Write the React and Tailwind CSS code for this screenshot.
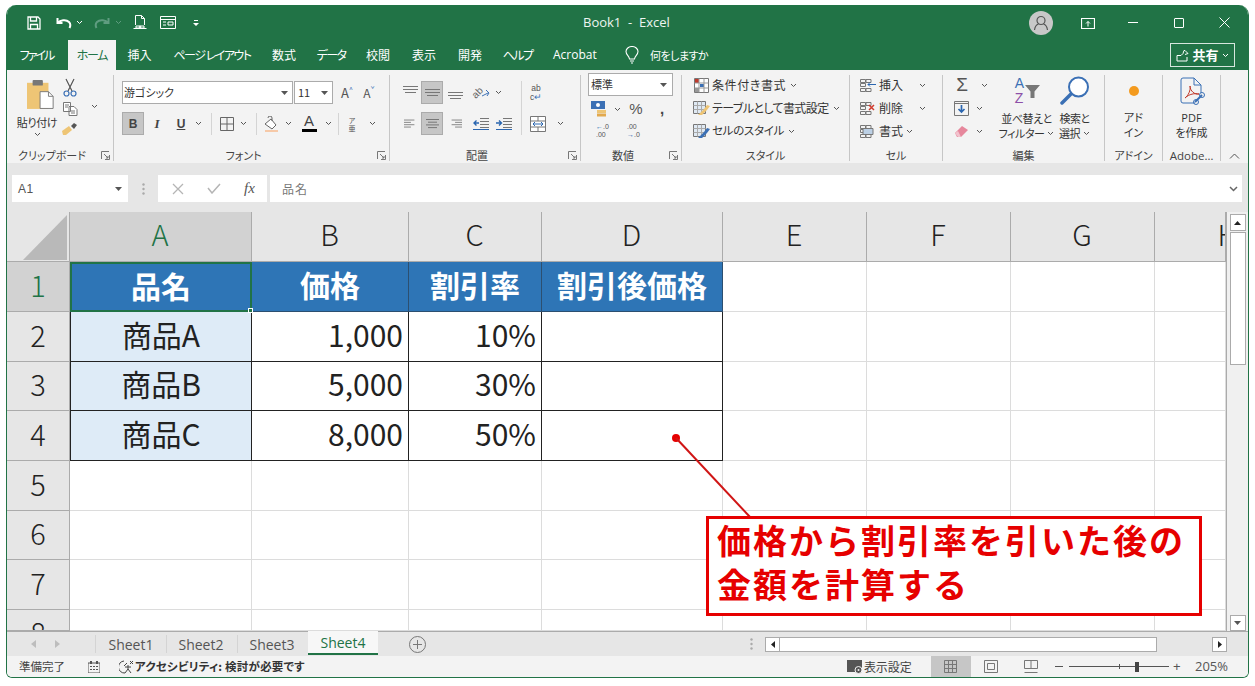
import React from "react";

const Chev = ({ c = "#555", w = 7 }) => (
  <svg width={w} height="5" viewBox="0 0 7 5" fill="none"><path d="M1 1l2.5 2.5L6 1" stroke={c} strokeWidth="1" /></svg>
);
const Drop = () => (
  <svg width="7" height="4" viewBox="0 0 7 4"><path d="M0 0h7L3.5 4z" fill="#555" /></svg>
);
const Launcher = () => (
  <svg width="9" height="9" viewBox="0 0 9 9" fill="none" stroke="#777"><path d="M.5 8V.5H8M8.5 4v4.5H4M3 3l4 4M7 5v2H5" /></svg>
);
const Lines = ({ kind = "c", top = 0, w = 15 }) => {
  const rows = kind === "l" ? [[0, 12], [0, 8], [0, 12], [0, 8]] : kind === "r" ? [[3, 15], [7, 15], [3, 15], [7, 15]] : [[1, 14], [3, 12], [1, 14], [3, 12]];
  return (
    <svg width={w} height="11" viewBox="0 0 15 11" stroke="#777" fill="none">
      {rows.map((r, i) => <path key={i} d={`M${r[0]} ${1.5 + i * 2.7 + top}H${r[1]}`} />)}
    </svg>
  );
};
const VLines = ({ y }) => (
  <svg width="15" height="14" viewBox="0 0 15 14" stroke="#777" fill="none">
    <path d={`M0 ${y + .5}H15M0 ${y + 3.5}H15M2 ${y + 6.5}H13`} />
  </svg>
);
const Sep = ({ h = "h-[22px]" }) => <div className={`w-px shrink-0 bg-[#d4d4d4] ${h}`} />;
const S = ({ c, children }) => <div className={`flex items-center justify-center shrink-0 ${c}`}>{children}</div>;

function Group({ w, label, launcher = true, children }) {
  return (
    <div className={`${w} shrink-0 flex flex-col border-r border-[#c6c6c6] h-[86px]`}>
      <div className="flex-1 min-h-0">{children}</div>
      <div className="h-[12px] flex items-center">
        <div className="flex-1 text-center text-[11px] leading-[12px] text-[#444] whitespace-nowrap">{label}</div>
        {launcher && <div className="w-[16px] flex justify-center"><Launcher /></div>}
      </div>
    </div>
  );
}

function TitleBar() {
  return (
    <div className="h-[35px] bg-[#217346] flex items-center text-white relative shrink-0">
      <S c="w-[14px] ml-[20px]">
        <svg width="14" height="14" viewBox="0 0 14 14" fill="none" stroke="#fff" strokeWidth="1.3"><path d="M1 1h10l2 2v10H1zM3.5 1v4h6V1M3.5 13V8.5h7V13" /></svg>
      </S>
      <S c="w-[20px] ml-[13px]">
        <svg width="16" height="12" viewBox="0 0 16 12" fill="none" stroke="#fff" strokeWidth="2"><path d="M1.5 1v5h5M2 6c2-3 8-4 11-1 1.500 1.500 1.500 4 .5 6" /></svg>
      </S>
      <S c="w-[10px]"><Chev c="#fff" /></S>
      <S c="w-[20px] ml-[8px]">
        <svg width="16" height="12" viewBox="0 0 16 12" fill="none" stroke="#5f9c80" strokeWidth="2"><path d="M14.500 1v5h-5M14 6c-2-3-8-4-11-1-1.500 1.500-1.500 4-.5 6" /></svg>
      </S>
      <S c="w-[10px] ml-[1px]"><Chev c="#5f9c80" /></S>
      <S c="w-[14px] ml-[10px]">
        <svg width="14" height="15" viewBox="0 0 14 15" fill="none" stroke="#fff"><path d="M2.500 10V.5h6l3 3V10M8.500.5v3h3M.5 13.500h13M3 11h8v2H3z" /><circle cx="7" cy="12" r=".9" fill="#fff" /></svg>
      </S>
      <S c="w-[16px] ml-[13px]">
        <svg width="16" height="13" viewBox="0 0 16 13" fill="none" stroke="#fff"><path d="M.5.500h15v12H.5zM1 3.500h14M3 6h3M3 9h3M8 6h5v3H8z" /></svg>
      </S>
      <S c="w-[8px] ml-[16px]">
        <svg width="6" height="6" viewBox="0 0 6 6" fill="#fff"><path d="M1 0h4v1H1zM0 3h6L3 6z" /></svg>
      </S>
      <div className="absolute left-[576px] text-[13px] whitespace-nowrap [font-family:'Open_Sans',sans-serif] text-[#eef5f1]">Book1&nbsp; -&nbsp; Excel</div>
      <div className="ml-auto flex items-center">
        <div className="w-[24px] h-[24px] rounded-full bg-[#c8c8c8] flex items-center justify-center">
          <svg width="16" height="16" viewBox="0 0 16 16" fill="none" stroke="#555" strokeWidth="1.200"><circle cx="8" cy="5.500" r="4" /><path d="M1.500 15c.5-3.500 2.500-5.500 4-6M14.500 15c-.5-3.500-2.500-5.500-4-6" /></svg>
        </div>
        <S c="w-[15px] ml-[27px]">
          <svg width="14" height="12" viewBox="0 0 14 12" fill="none" stroke="#fff"><path d="M.5 1.500h13v10H.5zM0 1.500h14" strokeWidth="1.200" /><path d="M7 9.500V4.500M5 6.500l2-2 2 2" /></svg>
        </S>
        <S c="w-[12px] ml-[32px]"><div className="w-[10px] h-px bg-white" /></S>
        <S c="w-[12px] ml-[34px]"><div className="w-[10px] h-[10px] border border-white rounded-[1px]" /></S>
        <S c="w-[12px] ml-[33px] mr-[18px]">
          <svg width="11" height="11" viewBox="0 0 11 11" stroke="#fff"><path d="M.5.500l10 10M10.500.500l-10 10" /></svg>
        </S>
      </div>
    </div>
  );
}

const tabs = [
  { c: "w-[33px] ml-[13px] tracking-[-2px]", t: "ファイル" },
  { c: "w-[48px] ml-[15px] tracking-[-1.300px] bg-[#f3f3f3] text-[#217346]", t: "ホーム" },
  { c: "w-[23px] ml-[12px]", t: "挿入" },
  { c: "w-[78px] ml-[22px] tracking-[-1.500px]", t: "ページ レイアウト" },
  { c: "w-[24px] ml-[21px]", t: "数式" },
  { c: "w-[28px] ml-[21px] tracking-[-1.600px]", t: "データ" },
  { c: "w-[24px] ml-[21px]", t: "校閲" },
  { c: "w-[24px] ml-[22px]", t: "表示" },
  { c: "w-[24px] ml-[22px]", t: "開発" },
  { c: "w-[29px] ml-[21px] tracking-[-1.600px]", t: "ヘルプ" },
];

function TabBar() {
  return (
    <div className="h-[30px] bg-[#217346] flex items-end text-white text-[12px] shrink-0">
      {tabs.map(({ c, t }) => (
        <div key={t} className={`${c} h-[30px] flex items-center justify-center whitespace-nowrap`}>{t}</div>
      ))}
      <div className="ml-[21px] w-[46px] h-[30px] flex items-center text-[12px] whitespace-nowrap [font-family:'Open_Sans',sans-serif]">Acrobat</div>
      <S c="w-[16px] ml-[25px] h-[30px]">
        <svg width="14" height="18" viewBox="0 0 14 18" fill="none" stroke="#fff" strokeWidth="1.100"><path d="M4.500 13c0-3-3.500-4-3.500-7.500a6 5 0 0 1 12 0C13 9 9.500 10 9.500 13zM5 15h4M6 17h2" /></svg>
      </S>
      <div className="ml-[10px] h-[30px] flex items-center text-[11px] tracking-[-0.500px] whitespace-nowrap">何をしますか</div>
      <div className="ml-auto mr-[13px] mb-[3px] w-[65px] h-[24px] border border-[#d7e6de] flex items-center justify-center gap-[3px]">
        <svg width="13" height="13" viewBox="0 0 13 13" fill="none" stroke="#fff"><path d="M1 6.500h4l2-2 1-3h1l3 3-3 1M1 6.500v5.500h10V8" /></svg>
        <span className="font-bold text-[13px]">共有</span>
        <Chev c="#fff" />
      </div>
    </div>
  );
}

function Clipboard() {
  return (
    <Group w="w-[107px]" label="クリップボード">
      <div className="flex">
        <div className="w-[50px] ml-[5px] mt-[3px] flex flex-col items-center">
          <svg className="ml-[8px]" width="28" height="32" viewBox="0 0 30 32">
            <rect x="0" y="4" width="23" height="28" fill="#eec575" />
            <rect x="6" y="1" width="11" height="6" rx="1" fill="#777" />
            <path d="M14 13.500h9l5 5v13H14z" fill="#fff" stroke="#777" />
            <path d="M23 13.500v5h5" fill="none" stroke="#777" />
          </svg>
          <div className="text-[11px] leading-[14px] mt-[5px] whitespace-nowrap text-[#333] tracking-[-0.4px]">貼り付け</div>
          <div className="mt-[3px]"><Chev /></div>
        </div>
        <div className="w-[20px] ml-[-2px] flex flex-col items-center pt-[3px]">
          <svg width="14" height="20" viewBox="0 0 14 20" fill="none" stroke="#555" strokeWidth="1.200"><path d="M3 1l6 12M11 1L5 13" /><circle cx="3.500" cy="15.500" r="2.500" stroke="#3b70b5" /><circle cx="10.500" cy="15.500" r="2.500" stroke="#3b70b5" /></svg>
          <svg className="mt-[4px]" width="15" height="14" viewBox="0 0 15 14" fill="#fff" stroke="#777"><path d="M.5.500h7v9h-7zM6 4.500h5l3 3v6H6z" /><path d="M2 3h4M2 5h3M8 9h4M8 11h4" fill="none" /></svg>
          <svg className="mt-[6px]" width="16" height="13" viewBox="0 0 16 13"><path d="M0 9l7-5 3 4-6 5H1z" fill="#eec575" /><path d="M9 4l3-3 3 2-3 4z" fill="#555" /></svg>
        </div>
        <div className="ml-[11px] mt-[29px]"><Chev /></div>
      </div>
    </Group>
  );
}

function FontGroup() {
  return (
    <Group w="w-[276px]" label="フォント">
      <div className="pl-[8px] pt-[6px] flex flex-col">
        <div className="flex items-center h-[23px]">
          <div className="w-[171px] h-[23px] bg-white border border-[#ababab] flex items-center pl-[1px] text-[11px] text-[#333]">
            <span className="flex-1">游ゴシック</span><span className="mr-[4px]"><Drop /></span>
          </div>
          <div className="ml-[1px] w-[39px] h-[23px] bg-white border border-[#ababab] flex items-center pl-[3px] text-[11px] text-[#333]">
            <span className="flex-1">11</span><span className="mr-[4px]"><Drop /></span>
          </div>
          <S c="w-[22px] ml-[3px] text-[13px] text-[#555]">A<sup className="text-[7px] text-[#3b70b5]">^</sup></S>
          <S c="w-[22px] text-[12px] text-[#555]">A<sup className="text-[7px] text-[#3b70b5]">ˇ</sup></S>
        </div>
        <div className="flex items-center h-[23px] mt-[8px]">
          <S c="w-[22px] h-[23px] bg-[#c6c6c6] border border-[#ababab] font-bold text-[12px] text-[#444] [font-family:'Liberation_Sans',sans-serif]">B</S>
          <S c="w-[26px] italic font-bold text-[13px] text-[#444] [font-family:'Liberation_Serif',serif]">I</S>
          <S c="w-[22px] underline font-bold text-[12px] text-[#444] [font-family:'Liberation_Sans',sans-serif]">U</S>
          <S c="w-[12px]"><Chev /></S>
          <S c="w-[14px]"><Sep /></S>
          <S c="w-[18px]">
            <svg width="14" height="14" viewBox="0 0 14 14" fill="none" stroke="#666"><path d="M.5.500h13v13H.5zM7 .5v13M.5 7h13" /></svg>
          </S>
          <S c="w-[14px]"><Chev /></S>
          <S c="w-[12px]"><Sep /></S>
          <S c="w-[20px]">
            <svg width="16" height="16" viewBox="0 0 16 16"><path d="M1 8l6-5 5 6-4 4z" fill="#fff" stroke="#666" /><path d="M4 2a2 2 0 0 1 4 0v3" fill="none" stroke="#666" /><rect x="1" y="14" width="13" height="2" fill="#f6c9a8" /></svg>
          </S>
          <S c="w-[12px]"><Chev /></S>
          <S c="w-[30px] flex-col">
            <span className="text-[15px] leading-[14px] text-[#444] [font-family:'Liberation_Sans',sans-serif] mt-[-2px]">A</span>
            <div className="w-[15px] h-[3px] bg-black mt-[1px]" />
          </S>
          <S c="w-[8px]"><Chev /></S>
          <S c="w-[12px]"><Sep /></S>
          <S c="w-[16px] flex-col text-[7px] leading-[8px] text-[#555]"><span>ア</span><span>亜</span></S>
          <S c="w-[24px]"><Chev /></S>
        </div>
      </div>
    </Group>
  );
}

function AlignGroup() {
  const Box = ({ children }) => <S c="w-[22px] h-[23px] bg-[#c6c6c6] border border-[#ababab]">{children}</S>;
  return (
    <Group w="w-[191px]" label="配置">
      <div className="pl-[10px] pt-[6px] flex flex-col">
        <div className="flex items-center h-[23px]">
          <S c="w-[21px]"><VLines y={0} /></S>
          <Box><VLines y={3} /></Box>
          <S c="w-[25px]"><VLines y={6} /></S>
          <S c="w-[26px] relative">
            <span className="-rotate-45 text-[10px] leading-[10px] text-[#666] [font-family:'Liberation_Sans',sans-serif]">ab</span>
            <svg className="ml-[-3px] mt-[2px]" width="9" height="9" viewBox="0 0 9 9" fill="none" stroke="#3b70b5"><path d="M1 7l6-3M5 1l3 3-2 3" /></svg>
          </S>
          <S c="w-[8px]"><Chev /></S>
          <S c="w-[14px] ml-[12px]"><Sep h="h-[23px]" /></S>
          <S c="w-[16px] flex-col text-[8.500px] leading-[9px] text-[#555] [font-family:'Liberation_Sans',sans-serif]"><span>ab</span><span>c<span className="text-[#3b70b5]">↵</span></span></S>
        </div>
        <div className="flex items-center h-[23px] mt-[8px]">
          <S c="w-[21px]"><Lines kind="l" w={13} /></S>
          <Box><Lines kind="c" /></Box>
          <S c="w-[25px]"><Lines kind="r" w={13} /></S>
          <S c="w-[25px]">
            <svg width="16" height="13" viewBox="0 0 16 13" fill="none"><path d="M7 1.500h9M7 4.500h9M7 7.500h9M7 10.500h9" stroke="#777" /><path d="M6 6H1M3.500 3.500L1 6l2.500 2.500" stroke="#2a66b0" strokeWidth="1.400" /><path d="M0 12.500h16" stroke="#2a66b0" /></svg>
          </S>
          <S c="w-[21px]">
            <svg width="16" height="13" viewBox="0 0 16 13" fill="none"><path d="M7 1.500h9M7 4.500h9M7 7.500h9M7 10.500h9" stroke="#777" /><path d="M0 6h5M3 3.500L5.500 6 3 8.500" stroke="#2a66b0" strokeWidth="1.400" /><path d="M0 12.500h16" stroke="#2a66b0" /></svg>
          </S>
          <S c="w-[14px] self-end"><Sep h="h-[31px]" /></S>
          <S c="w-[20px]">
            <svg width="16" height="16" viewBox="0 0 16 16" fill="#fff" stroke="#777"><path d="M.5.500h15v15H.5zM.5 5h15M.5 11h15M8 .5V5M8 11v4.500" /><path d="M3 8h10M5 6l-2 2 2 2M11 6l2 2-2 2" stroke="#2a66b0" fill="none" /></svg>
          </S>
          <S c="w-[24px]"><Chev /></S>
        </div>
      </div>
    </Group>
  );
}

function NumberGroup() {
  return (
    <Group w="w-[101px]" label="数値">
      <div className="pl-[7px] mt-[-2px] flex flex-col">
        <div className="w-[85px] h-[23px] bg-white border border-[#ababab] flex items-center pl-[2px] text-[11px] text-[#333]">
          <span className="flex-1">標準</span><span className="mr-[5px]"><Drop /></span>
        </div>
        <div className="flex items-center h-[20px] mt-[3px]">
          <S c="w-[23px]">
            <svg width="17" height="17" viewBox="0 0 17 17"><rect x="0" y="0" width="14" height="8" fill="#3b70b5" /><circle cx="7" cy="4" r="2" fill="#fff" /><rect x="6" y="9" width="9" height="3" fill="#eec575" /><rect x="6" y="12.500" width="9" height="3" fill="#e2a94e" /></svg>
          </S>
          <S c="w-[11px] ml-[1px]"><Chev /></S>
          <S c="w-[26px] text-[15px] text-[#555] [font-family:'Liberation_Sans',sans-serif]">%</S>
          <S c="w-[26px] text-[15px] font-bold text-[#444] [font-family:'Liberation_Sans',sans-serif]">,</S>
        </div>
        <div className="flex items-center h-[18px] mt-[3px] pl-[8px]">
          <div className="w-[18px] text-[7px] leading-[8px] text-[#555] [font-family:'Liberation_Sans',sans-serif]"><span className="text-[#2a66b0]">←</span>.0<br />.00</div>
          <div className="w-[18px] ml-[10px] text-[7px] leading-[8px] text-[#555] [font-family:'Liberation_Sans',sans-serif] pl-[3px]">.00<br /><span className="text-[#2a66b0]">→</span>.0</div>
        </div>
      </div>
    </Group>
  );
}

const StyleIcon = ({ kind }) => (
  kind === 0 ? (
    <svg width="15" height="15" viewBox="0 0 15 15"><path d="M.5.500h14v14H.5z" fill="#fff" stroke="#777" /><path d="M1 1h4v4H1z" fill="#c0392b" /><path d="M6 6h4v3H6z" fill="#3b70b5" /><path d="M1 10h4v4H1z" fill="#999" /><path d="M5 .5v14M10 .5v14M.5 5h14M.5 10h14" stroke="#999" /></svg>
  ) : (
    <svg width="17" height="15" viewBox="0 0 17 15"><path d="M.5.500h12v12H.5z" fill="#dfe9f3" stroke="#777" /><path d="M.5 4.500h12M.5 8.500h12M4.500.5v12M8.500.5v12" stroke="#aaa" /><path d="M5 14l6-6 3-4 3 1-3 4-5 5z" fill={kind === 1 ? "#eec575" : "#3b70b5"} /></svg>
  )
);

function StylesGroup() {
  const rows = [
    { t: "条件付き書式", k: 0, c: "mt-[0px] text-[12px] tracking-[0.600px]" },
    { t: "テーブルとして書式設定", k: 1, c: "mt-[3px] text-[12px] tracking-[-0.600px]" },
    { t: "セルのスタイル", k: 2, c: "mt-[3px] text-[11.500px] tracking-[-0.300px]" },
  ];
  return (
    <Group w="w-[168px]" label="スタイル" launcher={false}>
      <div className="pl-[10px] flex flex-col">
        {rows.map(({ t, k, c }) => (
          <div key={t} className={`flex items-center h-[20px] ${c} text-[#333] whitespace-nowrap`}>
            <S c="w-[18px] mr-[2px]"><StyleIcon kind={k} /></S>
            <span>{t}</span>
            <span className="ml-[4px]"><Chev /></span>
          </div>
        ))}
      </div>
    </Group>
  );
}

function CellsGroup() {
  const Ic = ({ k }) => (
    <svg width="16" height="15" viewBox="0 0 16 15" fill="none" stroke="#777">
      <path d="M.5 1.500h5v3h-5zM.5 5.500h5v3h-5zM.5 10.500h5v3h-5zM6 1.500h5v3H6zM6 10.500h5v3H6z" />
      {k === 0 && <path d="M16 6.500H8M10 4.500l-2 2 2 2" stroke="#2a66b0" />}
      {k === 1 && <path d="M9 4l5 5M14 4L9 9" stroke="#d13c2f" strokeWidth="1.500" />}
      {k === 2 && <path d="M3 4.500h10v6H3z" fill="#bcd0e5" />}
    </svg>
  );
  const rows = [["挿入", 0, true, "mt-[0px]"], ["削除", 1, true, "mt-[3px]"], ["書式", 2, false, "mt-[3px]"]];
  return (
    <Group w="w-[93px]" label="セル" launcher={false}>
      <div className="pl-[10px] flex flex-col">
        {rows.map(([t, k, wide, m]) => (
          <div key={t} className={`flex items-center h-[20px] ${m} text-[12px] text-[#333] whitespace-nowrap`}>
            <S c="w-[16px] mr-[3px]"><Ic k={k} /></S>
            <span>{t}</span>
            <span className={wide ? "ml-[16px]" : "ml-[3px]"}><Chev /></span>
          </div>
        ))}
      </div>
    </Group>
  );
}

function EditGroup() {
  return (
    <Group w="w-[162px]" label="編集" launcher={false}>
      <div className="flex">
        <div className="ml-[11px] w-[45px] flex flex-col">
          <div className="flex items-center h-[20px]">
            <span className="w-[16px] text-center text-[19px] leading-[20px] text-[#555] [font-family:'Liberation_Sans',sans-serif]">Σ</span>
            <span className="ml-[11px]"><Chev /></span>
          </div>
          <div className="flex items-center h-[20px] mt-[3px]">
            <svg width="15" height="15" viewBox="0 0 15 15" fill="none"><path d="M.5.500h14v14H.5z" stroke="#777" /><path d="M.5 2.500h14" stroke="#777" /><path d="M7.500 4v7M4.500 8l3 3 3-3" stroke="#2a66b0" strokeWidth="1.700" /></svg>
            <span className="ml-[7px]"><Chev /></span>
          </div>
          <div className="flex items-center h-[20px] mt-[3px]">
            <svg width="15" height="13" viewBox="0 0 15 13"><path d="M1 8l7-7 6 4-7 7H3z" fill="#e6879c" /><path d="M1 8l3 4h3L4 6z" fill="#f2c2cd" /></svg>
            <span className="ml-[7px]"><Chev /></span>
          </div>
        </div>
        <div className="ml-[-1px] w-[57px] flex flex-col items-center pt-[2px]">
          <div className="flex items-center h-[28px] ml-[2px]">
            <div className="flex flex-col text-[14px] leading-[15px] font-normal [font-family:'Liberation_Sans',sans-serif]">
              <span className="text-[#3b70b5]">A</span><span className="text-[#8d4fa8]">Z</span>
            </div>
            <svg className="ml-[1px]" width="15" height="13" viewBox="0 0 15 13"><path d="M0 0h15L9.500 6.500V13h-4V6.500z" fill="#777" /></svg>
          </div>
          <div className="text-[11px] leading-[15px] mt-[6px] text-[#333] whitespace-nowrap tracking-[-0.5px]">並べ替えと</div>
          <div className="text-[11px] leading-[15px] text-[#333] whitespace-nowrap flex items-center tracking-[-0.5px]">フィルター<span className="ml-[3px]"><Chev /></span></div>
        </div>
        <div className="ml-[2px] w-[35px] flex flex-col items-center pt-[1px]">
          <svg width="30" height="29" viewBox="0 0 30 29" fill="none"><circle cx="18.500" cy="11" r="9.500" stroke="#3b70b5" strokeWidth="2" fill="#fff" /><path d="M11 18L2 27" stroke="#3b70b5" strokeWidth="3.500" strokeLinecap="round" /></svg>
          <div className="text-[11px] leading-[15px] mt-[6px] text-[#333] whitespace-nowrap tracking-[-0.5px]">検索と</div>
          <div className="text-[11px] leading-[15px] text-[#333] whitespace-nowrap flex items-center tracking-[-0.5px]">選択<span className="ml-[3px]"><Chev /></span></div>
        </div>
      </div>
    </Group>
  );
}

function AddinGroup() {
  return (
    <Group w="w-[58px]" label="アドイン" launcher={false}>
      <div className="flex flex-col items-center pt-[11px]">
        <div className="w-[10px] h-[10px] rounded-full bg-[#f39a1e]" />
        <div className="text-[11px] leading-[15px] mt-[14px] text-[#333]">アド</div>
        <div className="text-[11px] leading-[15px] text-[#333]">イン</div>
      </div>
    </Group>
  );
}

function PdfGroup() {
  return (
    <Group w="w-[58px]" label={<span className="[font-family:'Open_Sans',sans-serif] text-[11.500px]">Adobe…</span>} launcher={false}>
      <div className="flex flex-col items-center pt-[2px]">
        <svg width="28" height="29" viewBox="0 0 28 29" fill="none" stroke="#3b70b5" strokeWidth="1"><path d="M17 26H5a2 2 0 0 1-2-2V3a2 2 0 0 1 2-2h11l7 7v8" /><path d="M16 1v7h7" /><path d="M7 21c3-2 6-8 5-12 0 5 5 9 9 8-4-1-10 0-14 4z" stroke="#c0392b" /><path d="M17 25l7-7" strokeWidth="2" /><circle cx="24" cy="18" r="2.500" /><circle cx="18" cy="25" r="2.500" /></svg>
        <div className="text-[11px] leading-[15px] mt-[4px] text-[#333] [font-family:'Open_Sans',sans-serif]">PDF</div>
        <div className="text-[11px] leading-[15px] text-[#333] whitespace-nowrap">を作成</div>
      </div>
    </Group>
  );
}

function Ribbon() {
  return (
    <div className="h-[93px] bg-[#f3f3f3] flex pt-[5px] shrink-0 relative">
      <Clipboard /><FontGroup /><AlignGroup /><NumberGroup /><StylesGroup /><CellsGroup /><EditGroup /><AddinGroup /><PdfGroup />
      <div className="flex-1 flex items-end justify-center pb-[4px]">
        <svg width="11" height="6" viewBox="0 0 11 6" fill="none" stroke="#555"><path d="M1 5.500l4.500-4.500L10 5.500" /></svg>
      </div>
    </div>
  );
}

function FormulaBar() {
  return (
    <div className="h-[49px] bg-[#e6e6e6] flex items-start pt-[12px] pl-[5px] shrink-0">
      <div className="w-[116px] h-[27px] bg-white flex items-center pl-[6px] text-[12px] text-[#555] tracking-[0.6px] [font-family:'Liberation_Sans',sans-serif]">
        <span className="flex-1">A1</span><span className="mr-[6px]"><Drop /></span>
      </div>
      <div className="w-[30px] h-[27px] flex items-center justify-center">
        <svg width="3" height="12" viewBox="0 0 3 12" fill="#aaa"><circle cx="1.500" cy="1.500" r="1.200" /><circle cx="1.500" cy="6" r="1.200" /><circle cx="1.500" cy="10.500" r="1.200" /></svg>
      </div>
      <div className="w-[109px] h-[27px] bg-white flex items-center">
        <S c="w-[37px] ml-[1px]"><svg width="12" height="12" viewBox="0 0 12 12" stroke="#b5b5b5" strokeWidth="1.300"><path d="M1 1l10 10M11 1L1 11" /></svg></S>
        <S c="w-[36px]"><svg width="14" height="11" viewBox="0 0 14 11" fill="none" stroke="#b5b5b5" strokeWidth="1.500"><path d="M1 5l4 5 8-9" /></svg></S>
        <S c="w-[35px] italic text-[15px] text-[#555] [font-family:'Liberation_Serif',serif]">fx</S>
      </div>
      <div className="ml-[3px] w-[972px] h-[27px] bg-white flex items-center pl-[12px] pr-[4px] text-[12px] text-[#777]">
        <span className="flex-1 tracking-[1px]">品名</span>
        <svg width="9" height="6" viewBox="0 0 9 6" fill="none" stroke="#666" strokeWidth="1.500"><path d="M1 1l3.500 3.500L8 1" /></svg>
      </div>
    </div>
  );
}

const cols = ["A", "B", "C", "D", "E", "F", "G", "H"];
const rowsData = {
  1: ["品名", "価格", "割引率", "割引後価格"],
  2: ["商品A", "1,000", "10%", ""],
  3: ["商品B", "5,000", "30%", ""],
  4: ["商品C", "8,000", "50%", ""],
};

function Cell({ r, c }) {
  const data = rowsData[r];
  const base = "flex items-center min-w-0 overflow-hidden whitespace-nowrap pb-[5px] [font-feature-settings:normal]";
  if (data && c < 4) {
    if (r === 1) {
      if (c === 0) {
        return (
          <div className="relative bg-[#2e75b6] border-2 border-[#217346] flex items-center justify-center pb-[4px] text-white font-bold text-[30px] [font-feature-settings:normal]">
            {data[c]}
            <div className="absolute -right-[3px] -bottom-[3px] w-[5px] h-[5px] bg-[#217346] border border-white" />
          </div>
        );
      }
      return <div className={`${base} justify-center bg-[#2e75b6] text-white font-bold text-[30px] border-r border-b border-[#2c4f70]`}>{data[c]}</div>;
    }
    if (c === 0) return <div className={`${base} justify-center bg-[#deebf7] text-[#222] text-[30px] border-r border-b border-l border-[#222]`}>{data[c]}</div>;
    return <div className={`${base} justify-end pr-[5px] bg-white text-[#222] text-[30px] border-r border-b border-[#222]`}>{data[c]}</div>;
  }
  return <div className="bg-white border-r border-b border-[#dcdcdc]" />;
}

function Sheet() {
  return (
    <div className="relative flex shrink-0 h-[419px]">
      <div className="w-[1219px] shrink-0 overflow-hidden grid grid-cols-[63px_182px_157px_133px_181px_144px_144px_144px_71px] grid-rows-[50px_50px_50px_49px_50px_50px_49px_50px_21px]">
        <div className="bg-[#e6e6e6] border-r border-b border-[#ababab] flex items-end justify-end pr-[2px] pb-[1px]">
          <svg width="44" height="45" viewBox="0 0 44 45"><path d="M44 0v45H0z" fill="#b9b9b9" /></svg>
        </div>
        {cols.map((l, i) => (
          <div key={l} className={`flex items-center pb-[6px] text-[29px] font-light border-r border-b border-[#ababab] overflow-hidden ${i === 0 ? "bg-[#d2d2d2] text-[#217346]" : "bg-[#e6e6e6] text-[#222]"} ${l === "H" ? "justify-end" : "justify-center pr-[1px]"}`}>
            {l === "H" ? <span className="mr-[-13px]">H</span> : l}
          </div>
        ))}
        {[1, 2, 3, 4, 5, 6, 7, 8].map((r) => (
          <React.Fragment key={r}>
            <div className={`flex justify-center text-[29px] font-light border-r border-b border-[#ababab] overflow-hidden ${r === 8 ? "items-start" : "items-center pb-[4px]"} ${r === 1 ? "bg-[#d2d2d2] text-[#217346]" : "bg-[#e6e6e6] text-[#222]"}`}>{r}</div>
            {[0, 1, 2, 3, 4, 5, 6, 7].map((c) => <Cell key={c} r={r} c={c} />)}
          </React.Fragment>
        ))}
      </div>
      <div className="flex-1 bg-[#f0f0f0] border-l border-[#ababab] flex flex-col items-center pt-[2px]">
        <div className="w-[16px] h-[17px] bg-white border border-[#ababab] flex items-center justify-center">
          <svg width="7" height="4" viewBox="0 0 7 4"><path d="M0 4h7L3.500 0z" fill="#222" /></svg>
        </div>
        <div className="w-[16px] h-[133px] mt-[1px] bg-white border border-[#ababab]" />
        <div className="mt-auto w-[16px] h-[16px] bg-white border border-[#ababab] flex items-center justify-center">
          <Drop />
        </div>
      </div>
      <svg className="absolute left-[660px] top-[220px] pointer-events-none" width="100" height="90" viewBox="0 0 100 90">
        <circle cx="9" cy="6" r="4" fill="#e60000" />
        <path d="M9 6L83 85" stroke="#d01515" strokeWidth="2" />
      </svg>
      <div className="absolute left-[699px] top-[304px] w-[496px] h-[100px] bg-white border-[3px] border-[#e60000] pl-[8px] font-bold text-[#e60000] text-[34px] leading-[44px] tracking-[2px] whitespace-nowrap [font-feature-settings:normal]">
        <div className="-mt-[1px]">価格から割引率を引いた後の<br />金額を計算する</div>
      </div>
    </div>
  );
}

function SheetTabs() {
  return (
    <div className="h-[25px] bg-[#e6e6e6] border-t border-[#ababab] flex items-stretch shrink-0 text-[14px] text-[#555] [font-family:'Open_Sans',sans-serif]">
      <S c="w-[8px] ml-[22px]"><svg width="5" height="8" viewBox="0 0 5 8"><path d="M5 0v8L0 4z" fill="#bdbdbd" /></svg></S>
      <S c="w-[8px] ml-[16px]"><svg width="5" height="8" viewBox="0 0 5 8"><path d="M0 0v8l5-4z" fill="#bdbdbd" /></svg></S>
      <div className="ml-[34px] flex items-center h-[24px]"><Sep h="h-[18px]" /></div>
      <div className="w-[70px] flex items-center justify-center">Sheet1</div>
      <div className="flex items-center h-[24px]"><Sep h="h-[18px]" /></div>
      <div className="w-[70px] flex items-center justify-center pr-[2px]">Sheet2</div>
      <div className="flex items-center h-[24px]"><Sep h="h-[18px]" /></div>
      <div className="w-[70px] flex items-center justify-center pr-[2px]">Sheet3</div>
      <div className="w-[70px] mt-[-1px] flex items-center justify-center bg-[#f7f7f7] text-[#217346] border-b-2 border-[#217346] h-[24px] mb-[2px]">Sheet4</div>
      <S c="w-[18px] ml-[30px]">
        <svg width="17" height="17" viewBox="0 0 17 17" fill="none" stroke="#777"><circle cx="8.500" cy="8.500" r="8" /><path d="M8.500 4v9M4 8.500h9" /></svg>
      </S>
      <S c="w-[4px] ml-[323px]"><svg width="3" height="12" viewBox="0 0 3 12" fill="#aaa"><circle cx="1.500" cy="1.500" r="1.200" /><circle cx="1.500" cy="6" r="1.200" /><circle cx="1.500" cy="10.500" r="1.200" /></svg></S>
      <div className="ml-[12px] flex items-center h-[24px]">
        <S c="w-[15px] h-[15px] bg-white border border-[#ababab]"><svg width="4" height="7" viewBox="0 0 4 7"><path d="M4 0v7L0 3.500z" fill="#222" /></svg></S>
        <div className="w-[377px] h-[15px] bg-white border border-[#ababab] border-l-0" />
        <S c="w-[15px] h-[15px] ml-[55px] bg-white border border-[#ababab]"><svg width="4" height="7" viewBox="0 0 4 7"><path d="M0 0v7l4-3.500z" fill="#222" /></svg></S>
      </div>
    </div>
  );
}

function StatusBar() {
  return (
    <div className="h-[22px] flex-1 bg-[#f3f3f3] flex items-center text-[#444] text-[12px]">
      <span className="ml-[12px] w-[48px] whitespace-nowrap text-[11.500px]">準備完了</span>
      <S c="w-[13px] ml-[20px]">
        <svg width="12" height="12" viewBox="0 0 12 12" fill="#555"><path d="M0 2h12v10H0z" fill="none" stroke="#555" /><path d="M2 0h2v3H2zM8 0h2v3H8zM2 5h2v1H2zM5 5h2v1H5zM8 5h2v1H8zM2 8h2v1H2zM5 8h2v1H5zM8 8h2v1H8z" /></svg>
      </S>
      <S c="w-[16px] ml-[18px]">
        <svg width="15" height="14" viewBox="0 0 15 14" fill="none" stroke="#444"><path d="M5 1A6 6 0 1 0 6 13" /><path d="M8 3l-3 3M9 5v4M6 13l3-4 3 4M6 7h6M11 1l3 3M14 1l-3 3" /></svg>
      </S>
      <span className="ml-[1px] font-bold text-[11.500px] tracking-[0.200px] text-[#333] whitespace-nowrap">アクセシビリティ: 検討が必要です</span>
      <div className="ml-auto flex items-center h-full">
        <S c="w-[17px]">
          <svg width="17" height="14" viewBox="0 0 17 14"><path d="M0 0h15v10H9v2H0z" fill="#555" /><circle cx="11.500" cy="10" r="3.500" fill="#555" stroke="#f3f3f3" /><circle cx="11.500" cy="10" r="1" fill="#f3f3f3" /></svg>
        </S>
        <span className="text-[12px] whitespace-nowrap tracking-[-0.100px] w-[48px]">表示設定</span>
        <S c="w-[40px] h-full ml-[19px] bg-[#c6c6c6]">
          <svg width="13" height="13" viewBox="0 0 13 13" fill="none" stroke="#777"><path d="M.5.500h12v12H.5zM4.500.5v12M8.500.5v12M.5 4.500h12M.5 8.500h12" /></svg>
        </S>
        <S c="w-[40px]">
          <svg width="14" height="13" viewBox="0 0 14 13" fill="none" stroke="#777"><path d="M.5.500h13v12H.5zM3.500 3.500h7v6h-7z" /></svg>
        </S>
        <S c="w-[40px]">
          <svg width="14" height="13" viewBox="0 0 14 13" fill="none" stroke="#777"><path d="M.5 8.500V.5h13v8M.5 8.500h13M7 .5v8M.5 12.500h13" /></svg>
        </S>
        <span className="ml-[4px] w-[8px] h-px bg-[#555]" />
        <div className="ml-[6px] w-[100px] h-px bg-[#555] flex items-center">
          <div className="ml-[50px] w-px h-[5px] bg-[#555]" />
          <div className="ml-[15px] w-[4px] h-[10px] bg-[#444]" />
        </div>
        <span className="ml-[4px] text-[13px] text-[#555] w-[10px] [font-family:'Liberation_Sans',sans-serif]">+</span>
        <span className="ml-[12px] mr-[20px] text-[13px] text-[#555] [font-family:'Open_Sans',sans-serif]">205%</span>
      </div>
    </div>
  );
}

export default function App() {
  return (
    <div className="w-[1255px] h-[686px] bg-white pl-[6px] pt-[5px] overflow-hidden [font-family:'Noto_Sans_CJK_JP','Noto_Sans',sans-serif] [font-feature-settings:'palt']">
      <div className="w-[1243px] h-[673px] rounded-t-[10px] rounded-b-[6px] border-x border-b border-[#217346] overflow-hidden flex flex-col">
        <TitleBar />
        <TabBar />
        <Ribbon />
        <FormulaBar />
        <Sheet />
        <SheetTabs />
        <StatusBar />
      </div>
    </div>
  );
}
